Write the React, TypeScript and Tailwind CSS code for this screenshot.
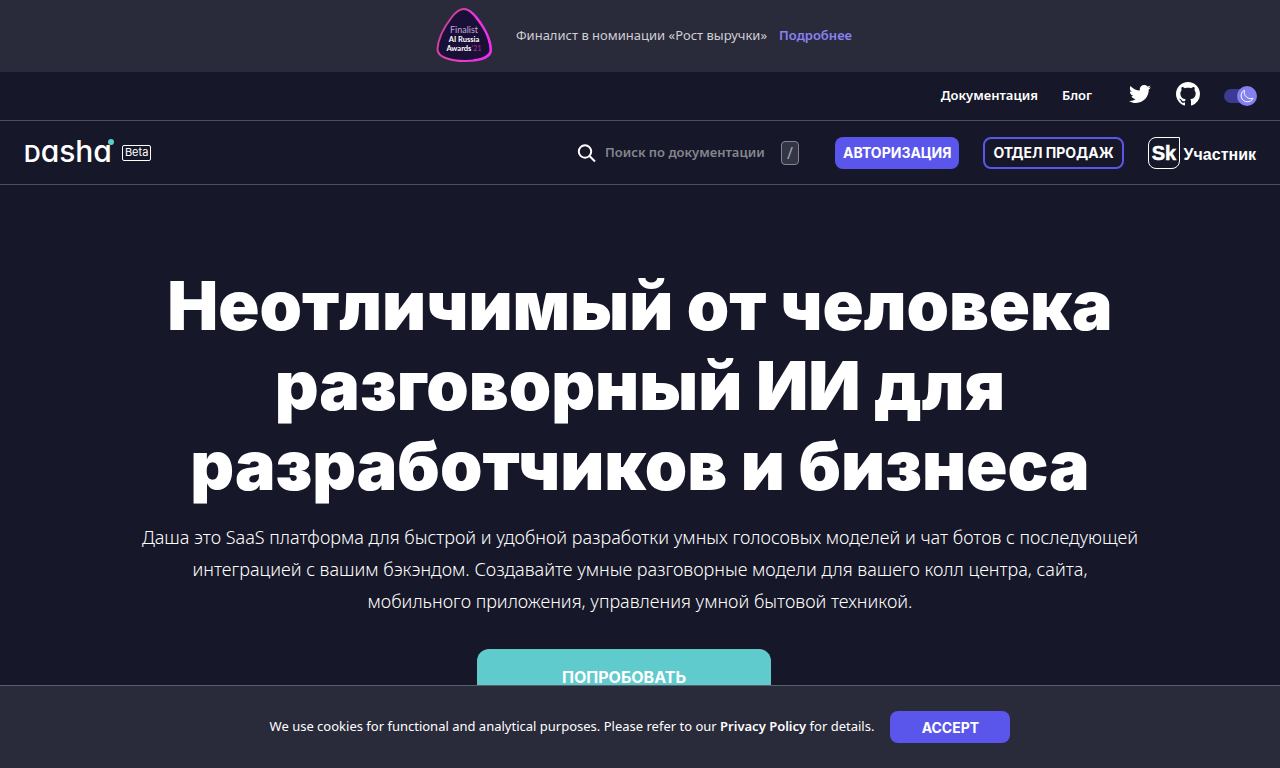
import { FaTwitter } from "react-icons/fa";

const AwardBadge = () => {
  return (
    <svg
      className="w-14 h-14 shrink-0"
      viewBox="0 0 56 56"
      role="img"
      aria-label="Finalist AI Russia Awards'21"
    >
      <defs>
        <linearGradient id="award" x1="0" y1="0" x2="1" y2="0.5">
          <stop offset="0" stopColor="#b93a86" />
          <stop offset="0.5" stopColor="#e045b4" />
          <stop offset="1" stopColor="#ee30e8" />
        </linearGradient>
      </defs>
      <path
        d="M28 1C24 1 20 3.500 15.500 9.500C9 18 2 30 1.500 41C1.300 49 14 53 29 53C43 53 55 50 55 42C55 31 47 18 40 9.500C35.500 3.500 32 1 28 1Z"
        fill="#190f37"
        stroke="url(#award)"
        strokeWidth="2"
      />
      <path d="M34 3C43 10 54 27 54.500 42C54.500 47 48 51 38 52" fill="none" stroke="#ee30e8" strokeWidth="2" />
      <g fontFamily="Lato, sans-serif" textAnchor="middle">
        <text x="28" y="25" fontSize="9" fill="#c5a6d8">Finalist</text>
        <text x="28" y="34" fontSize="7.500" fontWeight="700" fill="#fff">AI Russia</text>
        <text x="28" y="43" fontSize="7.500" fontWeight="700" fill="#fff">
          Awards<tspan fill="#b0308a" fontWeight="400">'21</tspan>
        </text>
      </g>
    </svg>
  );
};

const PromoBar = () => {
  return (
    <div className="flex h-18 items-center justify-center bg-[#292a3a] pl-2 text-[13px]">
      <AwardBadge />
      <p className="ml-6 text-[#cfcfd4]">Финалист в номинации «Рост выручки»</p>
      <a href="#award" className="ml-3 font-semibold text-[#8a82f2]">
        Подробнее
      </a>
    </div>
  );
};

const ThemeSwitch = () => {
  return (
    <label className="relative flex h-5 w-8 cursor-pointer items-center">
      <input type="checkbox" defaultChecked aria-label="Тёмная тема" className="peer sr-only" />
      <span className="h-3.5 w-7 rounded-full bg-[#3d3994]"></span>
      <span className="absolute -right-px flex size-5 items-center justify-center rounded-full bg-[#8580f0]">
        <svg className="size-3.5" viewBox="0 0 14 14" fill="none" stroke="#fff" strokeLinejoin="round">
          <path d="M4.500 1.200C1.700 2.600 0.700 5.400 1.300 8C2 11 4.600 12.900 7.500 12.800C9.900 12.700 11.900 11.500 13 9.500C9.800 10 7 9.200 5.400 6.900C4.200 5.200 3.900 3.100 4.500 1.200Z" />
        </svg>
      </span>
    </label>
  );
};

const TopNav = () => {
  return (
    <nav className="flex h-12 items-center justify-end px-6 text-[13px] font-semibold">
      <a href="#docs">Документация</a>
      <a href="#blog" className="ml-6">
        Блог
      </a>
      <div className="mb-1 ml-9 flex items-center gap-6">
        <a href="#twitter" aria-label="Twitter">
          <FaTwitter className="size-6 p-px" />
        </a>
        <a href="#github" aria-label="GitHub">
          <svg className="size-6" viewBox="0 0 16 16" fill="currentColor">
            <path d="M8 0C3.580 0 0 3.580 0 8c0 3.540 2.290 6.530 5.470 7.590.4.070.55-.17.55-.38 0-.19-.01-.82-.01-1.490-2.010.37-2.530-.49-2.690-.94-.09-.23-.48-.94-.82-1.130-.28-.15-.68-.52-.01-.53.63-.01 1.080.58 1.230.82.72 1.210 1.870.87 2.330.66.07-.52.28-.87.51-1.070-1.780-.2-3.640-.89-3.640-3.950 0-.87.31-1.590.82-2.150-.08-.2-.36-1.020.08-2.120 0 0 .67-.21 2.200.82.64-.18 1.320-.27 2-.27s1.360.09 2 .27c1.530-1.040 2.200-.82 2.200-.82.44 1.100.16 1.920.08 2.120.51.56.82 1.270.82 2.150 0 3.070-1.870 3.750-3.650 3.950.29.25.54.73.54 1.480 0 1.070-.01 1.930-.01 2.200 0 .21.15.46.55.38A8.010 8.010 0 0 0 16 8c0-4.420-3.580-8-8-8z" />
          </svg>
        </a>
      </div>
      <div className="ml-6">
        <ThemeSwitch />
      </div>
    </nav>
  );
};

const Logo = () => {
  return (
    <a href="#home" aria-label="Dasha Beta" className="flex items-center font-['Inter',sans-serif]">
      <span className="relative flex items-baseline text-[30px] leading-8 font-medium [font-feature-settings:'cv11']">
        <span className="text-[23px] font-semibold">D</span>asha
        <span className="absolute top-1 -right-0.5 size-1.5 rounded-full bg-[#5fcbcd]"></span>
      </span>
      <span className="ml-2.5 flex h-4 items-center rounded-xs border border-white px-0.5 text-[11px]">
        Beta
      </span>
    </a>
  );
};

const SearchBox = () => {
  return (
    <div className="ml-auto flex items-center">
      <svg className="size-5" viewBox="0 0 20 20" fill="none" stroke="#fff" strokeWidth="2">
        <circle cx="8" cy="8.500" r="6.200" />
        <path d="M12.500 13L18 18.500" />
      </svg>
      <input
        type="search"
        aria-label="Поиск по документации"
        placeholder="Поиск по документации"
        className="ml-2 w-44 text-[13px] font-semibold outline-none placeholder:text-[#85858f]"
      />
      <kbd className="flex h-6 w-[18px] items-center justify-center rounded-sm border border-[#85858f] bg-[#343544] font-['Noto_Sans',sans-serif] text-base text-[#a5a5ad]">
        /
      </kbd>
    </div>
  );
};

const SkLogo = () => {
  return (
    <svg className="size-8" viewBox="0 0 32 32" fill="none">
      <path d="M8 0.500H31.500V24A7.500 7.500 0 0 1 24 31.500H8A7.500 7.500 0 0 1 0.500 24V8A7.500 7.500 0 0 1 8 0.500Z" stroke="#fff" />
      <text
        x="16"
        y="23"
        textAnchor="middle"
        fontFamily="Liberation Sans, sans-serif"
        fontSize="20"
        fontWeight="700"
        fill="#fff"
        stroke="#fff"
        strokeWidth="0.500"
      >
        Sk
      </text>
    </svg>
  );
};

const MainNav = () => {
  return (
    <div className="flex h-[65px] items-center border-y border-[#4d4e5d] px-6">
      <Logo />
      <SearchBox />
      <button className="ml-9 h-8 rounded-lg bg-[#5a56ec] px-2 font-['Inter',sans-serif] text-[14px] font-bold">
        АВТОРИЗАЦИЯ
      </button>
      <button className="ml-6 h-8 rounded-lg border-2 border-[#5a56ec] px-2 font-['Inter',sans-serif] text-[14px] font-bold">
        ОТДЕЛ ПРОДАЖ
      </button>
      <a href="#sk" className="ml-6 flex items-center font-['Liberation_Sans',sans-serif] font-bold">
        <SkLogo />
        <span className="mt-1 ml-1 text-[16px]">Участник</span>
      </a>
    </div>
  );
};

const Hero = () => {
  return (
    <main className="flex flex-col items-center px-6 pt-20 text-center">
      <h1 className="max-w-[1000px] font-['Inter',sans-serif] text-[68px] leading-[80px] font-black">
        Неотличимый от человека разговорный ИИ для разработчиков и бизнеса
      </h1>
      <p className="mt-4 max-w-[1000px] text-[18px] leading-8 font-light">
        Даша это SaaS платформа для быстрой и удобной разработки умных голосовых моделей и чат ботов с
        последующей интеграцией с вашим бэкэндом. Создавайте умные разговорные модели для вашего колл
        центра, сайта, мобильного приложения, управления умной бытовой техникой.
      </p>
      <button className="mt-8 mr-8 h-14 w-[294px] rounded-xl bg-[#5fcbcd] font-['Inter',sans-serif] text-[16px] font-bold">
        ПОПРОБОВАТЬ
      </button>
    </main>
  );
};

const CookieBar = () => {
  return (
    <div className="fixed inset-x-0 bottom-0 flex h-[83px] items-center justify-center border-t border-[#5c5d6a] bg-[#292a3a] text-[13px]">
      <p>
        We use cookies for functional and analytical purposes. Please refer to our{" "}
        <a href="#privacy" className="font-semibold">
          Privacy Policy
        </a>{" "}
        for details.
      </p>
      <button className="ml-4 h-8 w-30 rounded-lg bg-[#5a56ec] font-['Inter',sans-serif] text-[14px] font-bold">
        ACCEPT
      </button>
    </div>
  );
};

const App = () => {
  return (
    <div className="min-h-screen bg-[#161728] font-['Noto_Sans',sans-serif] text-white">
      <PromoBar />
      <header>
        <TopNav />
        <MainNav />
      </header>
      <Hero />
      <CookieBar />
    </div>
  );
};

export default App;
